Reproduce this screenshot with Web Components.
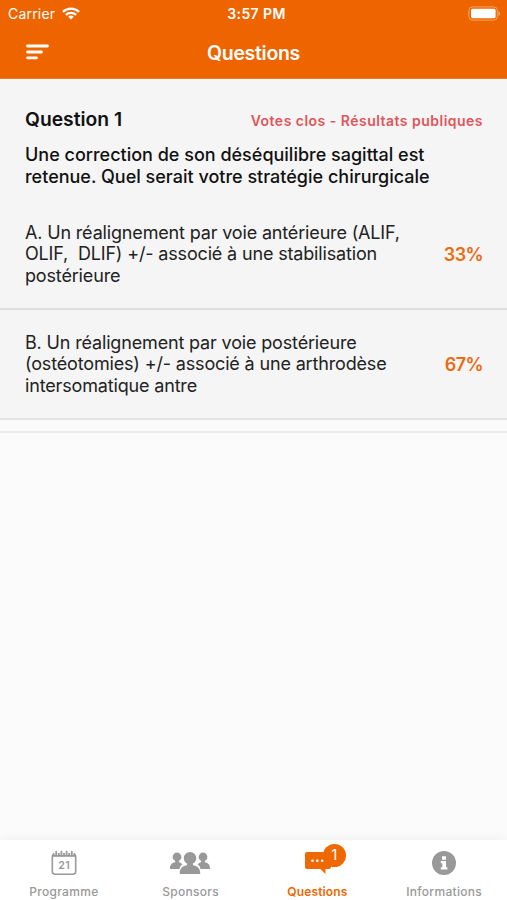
<!DOCTYPE html>
<html lang="fr">
<head>
<meta charset="utf-8">
<title>Questions</title>
<style>
  html, body {
    height: 100%;
    margin: 0;
  }
  body {
    font-family: Inter, "Liberation Sans", sans-serif;
    background: #fbfbfb;
    overflow: hidden;
  }
</style>
</head>
<body>
<vote-app></vote-app>
<script>
class StatusBar extends HTMLElement {
  constructor() {
    super()
    this.attachShadow({mode: 'open'})
    this.shadowRoot.innerHTML = this.template
  }

  get template() {
    return `
    <style>
    :host {
      display: grid;
      grid-template-columns: 1fr auto 1fr;
      align-items: center;
      height: 27px;
      padding: 0 6px 0 8px;
      font-size: 14px;
      line-height: 27px;
    }
    .carrier {
      display: flex;
      align-items: center;
      gap: 7px;
      letter-spacing: .2px;
    }
    .time {
      font-weight: 600;
      font-size: 14px;
      letter-spacing: .4px;
      padding-left: 4px;
    }
    .battery {
      justify-self: end;
    }
    svg {
      display: block;
    }
    </style>
    <span class="carrier">
      <span>Carrier</span>
      <svg width="18" height="13" viewBox="0 0 18 13" fill="none" stroke="#fff" stroke-width="2.3">
        <path d="M1 4.9a11.3 11.3 0 0 1 16 0M3.9 7.9a7.2 7.2 0 0 1 10.2 0"/>
        <path d="M9 12.6 6.2 9.8a4 4 0 0 1 5.6 0z" fill="#fff" stroke="none"/>
      </svg>
    </span>
    <span class="time">3:57 PM</span>
    <svg class="battery" width="33" height="15" viewBox="0 0 33 15">
      <rect x=".9" y=".9" width="28.4" height="13.2" rx="3.6" fill="none" stroke="#fff" stroke-opacity=".4"/>
      <rect x="3" y="2.8" width="24.6" height="9.4" rx="1.6" fill="#fff"/>
      <path d="M30.5 5.2c2 .6 2 4 0 4.6z" fill="#fff" fill-opacity=".5"/>
    </svg>
    `
  }
}
customElements.define('status-bar', StatusBar)

class AppHeader extends HTMLElement {
  constructor() {
    super()
    this.attachShadow({mode: 'open'})
    this.shadowRoot.innerHTML = this.template
  }

  get template() {
    return `
    <style>
    :host {
      display: block;
      flex: none;
      height: 79px;
      box-sizing: border-box;
      color: #fff;
      background: #ee6500;
      border-bottom: 1px solid #ef7a28;
    }
    .bar {
      display: grid;
      grid-template-columns: 1fr auto 1fr;
      align-items: center;
      height: 51px;
      padding: 0 26px;
    }
    h1 {
      margin: 0;
      font-size: 19.5px;
      font-weight: 600;
      line-height: 24px;
      letter-spacing: -.3px;
    }
    svg {
      display: block;
      margin-bottom: 2px;
    }
    </style>
    <status-bar></status-bar>
    <div class="bar">
      <svg width="23" height="16" viewBox="0 0 23 16" stroke="#fff" stroke-width="2.8" stroke-linecap="round">
        <path d="M1.5 2h20M1.5 8h14M1.5 13.8h9"/>
      </svg>
      <h1><slot></slot></h1>
    </div>
    `
  }
}
customElements.define('app-header', AppHeader)

class QuestionCard extends HTMLElement {
  constructor() {
    super()
    this.attachShadow({mode: 'open'})
    this.shadowRoot.innerHTML = this.template
  }

  get template() {
    return `
    <style>
    :host {
      display: block;
      background: #f5f5f5;
    }
    header {
      display: flex;
      align-items: baseline;
      justify-content: space-between;
      padding: 28px 25px 0;
      line-height: 24px;
    }
    .name {
      font-size: 19.3px;
      font-weight: 600;
      color: #111;
    }
    .status {
      margin-right: -1px;
      font-size: 14px;
      font-weight: 600;
      letter-spacing: .48px;
      color: #df5559;
    }
    .text {
      margin: 0;
      padding: 11px 25px 13px;
      font-size: 18px;
      font-weight: 500;
      line-height: 21.6px;
      color: #111;
      white-space: pre-line;
    }
    </style>
    <header>
      <span class="name"><slot name="name"></slot></span>
      <span class="status"><slot name="status"></slot></span>
    </header>
    <p class="text"><slot name="text"></slot></p>
    <slot></slot>
    `
  }
}
customElements.define('question-card', QuestionCard)

class AnswerRow extends HTMLElement {
  constructor() {
    super()
    this.attachShadow({mode: 'open'})
    this.shadowRoot.innerHTML = this.template
  }

  get template() {
    return `
    <style>
    :host {
      display: flex;
      align-items: center;
      justify-content: space-between;
      box-sizing: border-box;
      height: 110px;
      padding: 0 24px 0 25px;
      border-bottom: 2px solid #dedede;
    }
    :host(:last-of-type) {
      border-bottom-color: #e2e2e2;
    }
    .label {
      font-size: 18px;
      line-height: 21.7px;
      letter-spacing: -.16px;
      color: #222;
      white-space: pre-wrap;
    }
    .result {
      font-size: 18px;
      font-weight: 600;
      letter-spacing: -.6px;
      color: #ee6a10;
    }
    </style>
    <span class="label"><slot></slot></span>
    <span class="result">${this.getAttribute('result')}</span>
    `
  }
}
customElements.define('answer-row', AnswerRow)

class TabItem extends HTMLElement {
  constructor() {
    super()
    this.attachShadow({mode: 'open'})
    this.shadowRoot.innerHTML = this.template
  }

  get template() {
    return `
    <style>
    :host {
      position: relative;
      display: flex;
      flex: 1;
      flex-direction: column;
      align-items: center;
      color: #999;
      font-size: 12px;
      font-weight: 500;
      letter-spacing: .3px;
    }
    :host([selected]) {
      color: #ee6803;
      font-weight: 600;
      letter-spacing: .15px;
    }
    .icon {
      display: flex;
      align-items: center;
      height: 30px;
      padding-top: 8px;
    }
    .label {
      padding: 7px 0 0 1px;
      line-height: 16px;
    }
    .badge {
      position: absolute;
      top: 4px;
      left: calc(50% + 6px);
      width: 23px;
      height: 23px;
      border-radius: 50%;
      background: #ee6803;
      color: #fff;
      font-size: 15px;
      font-weight: 400;
      line-height: 22px;
      letter-spacing: 0;
      text-align: center;
    }
    </style>
    <span class="icon"><slot name="icon"></slot></span>
    <span class="label"><slot></slot></span>
    ${this.hasAttribute('badge') ? `<span class="badge">${this.getAttribute('badge')}</span>` : ''}
    `
  }
}
customElements.define('tab-item', TabItem)

class TabBar extends HTMLElement {
  constructor() {
    super()
    this.attachShadow({mode: 'open'})
    this.shadowRoot.innerHTML = this.template
  }

  get template() {
    return `
    <style>
    :host {
      display: flex;
      flex: none;
      height: 60px;
      background: #fff;
      box-shadow: 0 -2px 10px rgba(0, 0, 0, .045);
    }
    svg {
      display: block;
    }
    .calendar {
      padding-left: 1px;
    }
    .bubble {
      padding-left: 2px;
    }
    .day {
      font-size: 10.5px;
      font-weight: 600;
      letter-spacing: .3px;
    }
    </style>
    <tab-item>
      <svg class="calendar" slot="icon" width="26" height="26" viewBox="0 0 26 26" fill="none" stroke="#999">
        <rect x="1.3" y="3.8" width="23.4" height="20.4" rx="3" stroke-width="1.6"/>
        <path d="M2 4.8h22" stroke-width="3"/>
        <path d="M5.2 2v3M10.4 2v3M15.6 2v3M20.8 2v3" stroke="#fff" stroke-width="3.4"/>
        <path d="M5.2 1.6v3M10.4 1.6v3M15.6 1.6v3M20.8 1.6v3" stroke-width="1.8" stroke-linecap="round"/>
        <path d="M2 6h22" stroke-width="1.4"/>
        <text class="day" x="13.1" y="18.6" text-anchor="middle" fill="#999" stroke="none">21</text>
      </svg>
      Programme
    </tab-item>
    <tab-item>
      <svg slot="icon" width="42" height="24" viewBox="0 0 42 24" fill="#999">
        <circle cx="8" cy="6" r="4.4"/>
        <circle cx="34" cy="6" r="4.4"/>
        <path d="M6.2 9h3.6v3H6.2zM32.2 9h3.6v3h-3.6z"/>
        <path d="M1 18c-.4-4 2-6.2 5-6.8h4.5l3 2c-2 1.3-2.5 2.6-3 4.8zM41 18c.4-4-2-6.2-5-6.8h-4.5l-3 2c2 1.3 2.500 2.600 3 4.800z"/>
        <circle cx="21" cy="7.2" r="6.2"/>
        <path d="M18 12h6v3h-6z"/>
        <path d="M10.8 23c-.5-5 2.5-8 6.7-8.8 2 1 5 1 7 0 4.200.8 7.200 3.800 6.700 8.800z"/>
      </svg>
      Sponsors
    </tab-item>
    <tab-item selected badge="1">
      <svg class="bubble" slot="icon" width="26" height="22" viewBox="0 0 26 22" fill="#ee6803">
        <path d="M2 0h22a2 2 0 0 1 2 2v13a2 2 0 0 1-2 2h-3.500v5l-5-5H2a2 2 0 0 1-2-2V2a2 2 0 0 1 2-2z"/>
        <g fill="#fff"><circle cx="7.5" cy="8.8" r="1.3"/><circle cx="12.3" cy="8.8" r="1.3"/><circle cx="17.2" cy="8.8" r="1.3"/></g>
      </svg>
      Questions
    </tab-item>
    <tab-item>
      <svg slot="icon" width="24" height="24" viewBox="0 0 24 24">
        <circle cx="12" cy="12" r="12" fill="#999"/>
        <path d="M10 5.3h4v3.4h-4zM8.8 10H14v6.2h1.4v2.3H8.8v-2.3h1.500v-3.900H8.800z" fill="#fff"/>
      </svg>
      Informations
    </tab-item>
    `
  }
}
customElements.define('tab-bar', TabBar)

class VoteApp extends HTMLElement {
  constructor() {
    super()
    this.attachShadow({mode: 'open'})
    this.shadowRoot.innerHTML = this.template
  }

  get template() {
    return `
    <style>
    :host {
      display: flex;
      flex-direction: column;
      height: 100vh;
    }
    main {
      flex: 1;
    }
    .divider {
      height: 11px;
      border-bottom: 2px solid #ebebeb;
    }
    </style>
    <app-header>Questions</app-header>
    <main>
      <question-card>
        <span slot="name">Question 1</span>
        <span slot="status">Votes clos - Résultats publiques</span>
        <span slot="text">Une correction de son déséquilibre sagittal est
retenue. Quel serait votre stratégie chirurgicale</span>
        <answer-row result="33%">A. Un réalignement par voie antérieure (ALIF,
OLIF,  DLIF) +/- associé à une stabilisation
postérieure</answer-row>
        <answer-row result="67%">B. Un réalignement par voie postérieure
(ostéotomies) +/- associé à une arthrodèse
intersomatique antre</answer-row>
      </question-card>
      <div class="divider"></div>
    </main>
    <tab-bar></tab-bar>
    `
  }
}
customElements.define('vote-app', VoteApp)
</script>
</body>
</html>
